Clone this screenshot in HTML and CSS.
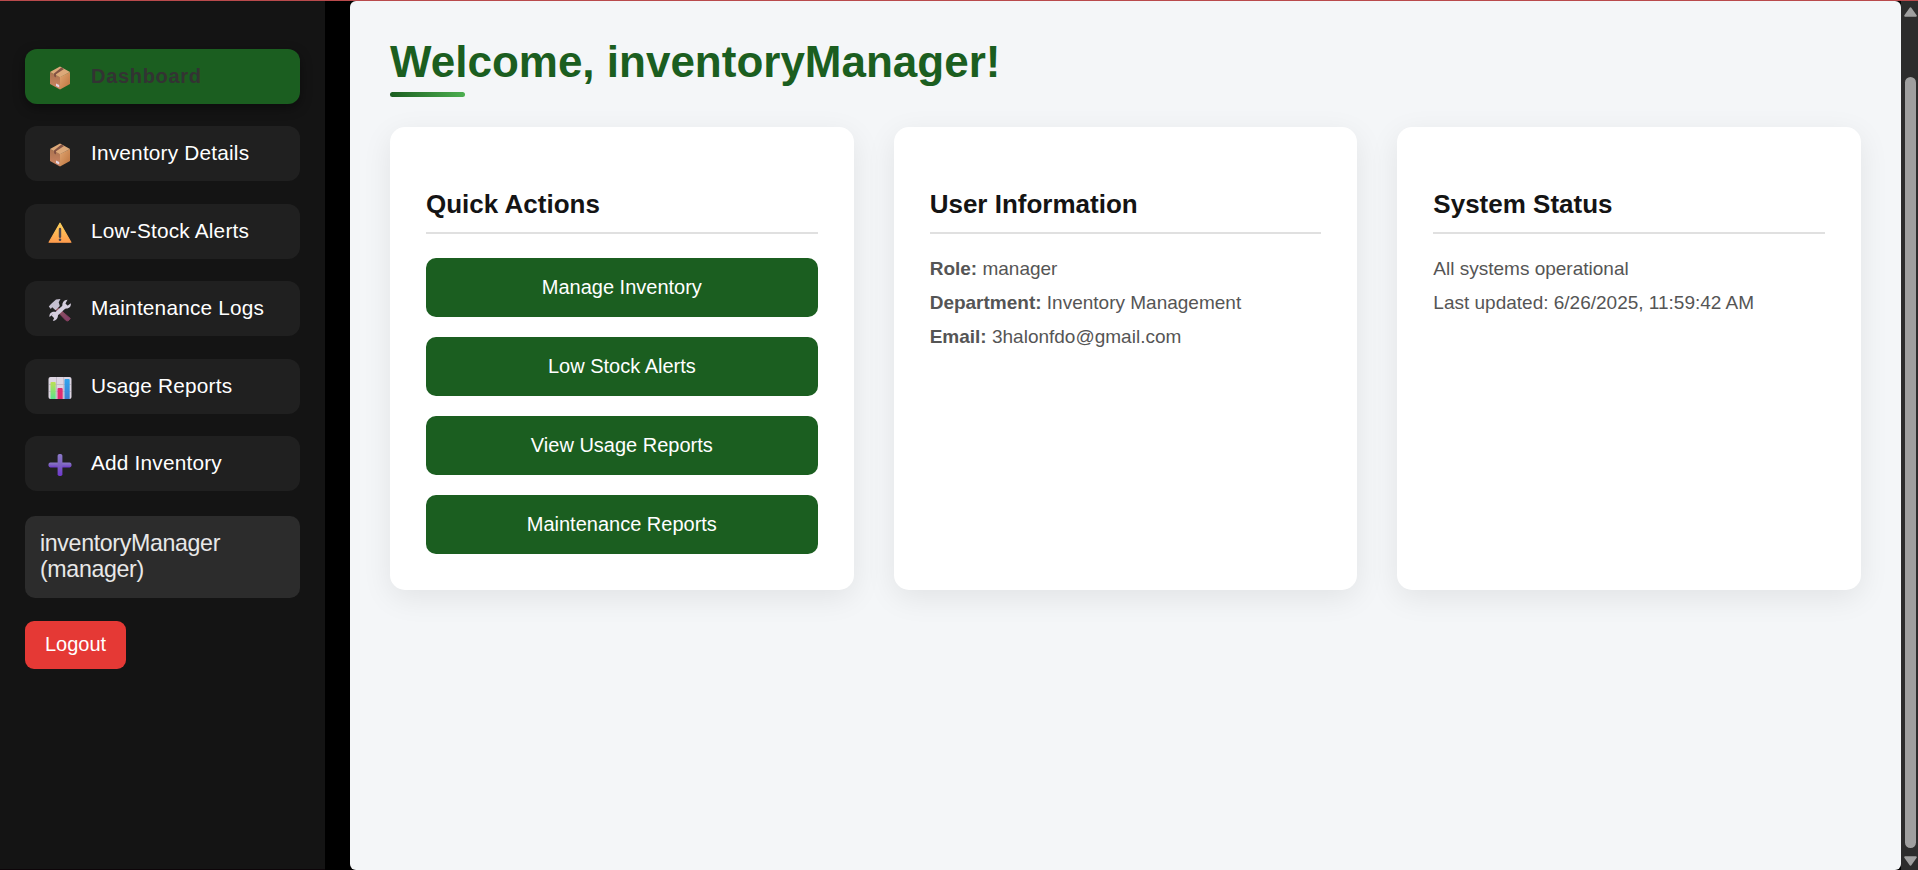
FILE: index.html
```html
<!DOCTYPE html>
<html lang="en">
<head>
<meta charset="utf-8">
<title>Inventory Dashboard</title>
<link rel="stylesheet" href="styles.css">
</head>
<body>
<svg class="defs" aria-hidden="true">
  <defs>
    <linearGradient id="warn" x2="0" y2="1"><stop stop-color="#ffd35c"/><stop offset="1" stop-color="#ff9c4d"/></linearGradient>
    <linearGradient id="boxL" x2="0" y2="1"><stop stop-color="#a97350"/><stop offset="1" stop-color="#cf8663"/></linearGradient>
    <linearGradient id="boxR" x2="1" y2="1"><stop stop-color="#e0a672"/><stop offset="1" stop-color="#bd733d"/></linearGradient>
    <linearGradient id="plus" x2="0" y2="1"><stop stop-color="#8b78c8"/><stop offset=".5" stop-color="#7c62bf"/><stop offset="1" stop-color="#7038cf"/></linearGradient>
    <linearGradient id="handle" x2="1" y2="1"><stop stop-color="#8a6058"/><stop offset="1" stop-color="#85396b"/></linearGradient>
    <linearGradient id="green" x2="0" y2="1"><stop stop-color="#bde052"/><stop offset="1" stop-color="#5be28c"/></linearGradient>
    <linearGradient id="blue" x2="0" y2="1"><stop stop-color="#2ea5ef"/><stop offset="1" stop-color="#3d7fd0"/></linearGradient>
    <symbol id="box" viewBox="0 0 24 24">
      <path d="M2 6 12 11v12.500L2 18z" fill="url(#boxL)"/>
      <path d="M12 11 22 6v12L12 23.500z" fill="url(#boxR)"/>
      <path d="M12 .5 22 6 12 11.300 2 6z" fill="#dda979"/>
      <path d="M13.300 1.500 16 3 8 8.200v3.200L6 10.300V7.400z" fill="#835344"/>
      <path d="m8 17.500 3.200 1.500v2.600L8 20z" fill="#e5d5e2"/>
    </symbol>
    <symbol id="alert" viewBox="0 0 24 24">
      <path d="M12 2.200 22.900 21.200H1.100z" fill="url(#warn)" stroke="url(#warn)" stroke-width="1.200" stroke-linejoin="round"/>
      <path d="M12 8v7.800" stroke="#4d4650" stroke-width="2.400" stroke-linecap="round"/>
      <circle cx="12" cy="18.700" r="1.300" fill="#4d4650"/>
    </symbol>
    <symbol id="tools" viewBox="0 0 24 24">
      <path d="M8.500 8.500 22.300 20.500 20 23 18 22.500 6.500 10.500z" fill="url(#handle)" stroke="#85405f"/>
      <path d="M.800 8.500 3 6 8 1.500 12.500 1 10.700 4.300 11.800 8 7.500 12.200 4.200 9.300 2.800 11z" fill="#c5bfd0"/>
      <path d="M5 19 18.500 6.800" stroke="#d5cedf" stroke-width="4.200"/>
      <path d="M19.500 1.700a5 5 0 0 0-4.700 7.100c1.300 2.300 5.600 2.400 7.300 0 .7-1 .9-2.300.7-3.500l-3.300 2.500-2.200-2z" fill="#d5cedf"/>
      <path d="M4.800 22.700a5 5 0 0 0 4.700-7.100c-1.300-2.300-5.600-2.400-7.300 0-.7 1-.9 2.300-.7 3.500l3.300-2.500 2.200 2z" fill="#d5cedf"/>
    </symbol>
    <symbol id="chart" viewBox="0 0 24 24">
      <rect x=".5" y="1" width="23" height="22" rx="2" fill="#ddd5e2"/>
      <path d="M1 8.500h22M1 15.500h22M8.500 1v22M15.700 1v22" stroke="#bcb3c1" stroke-width=".8"/>
      <path d="M2.500 7a1 1 0 0 1 1-1h3.200a1 1 0 0 1 1 1v16H2.500z" fill="url(#green)"/>
      <path d="M9.500 13a1 1 0 0 1 1-1h3.200a1 1 0 0 1 1 1v10H9.500z" fill="#df2d6f"/>
      <path d="M16.500 4a1 1 0 0 1 1-1h3.200a1 1 0 0 1 1 1v19h-5.200z" fill="url(#blue)"/>
    </symbol>
    <symbol id="add" viewBox="0 0 24 24">
      <rect x=".5" y="9.600" width="23" height="4.800" rx="1.800" fill="url(#plus)"/>
      <rect x="9.600" y="1" width="4.800" height="22" rx="1.800" fill="url(#plus)"/>
    </symbol>
  </defs>
</svg>
<div class="app">
  <aside class="sidebar">
    <nav class="nav">
      <a class="nav-item active"><svg class="icon"><use href="#box"/></svg><span>Dashboard</span></a>
      <a class="nav-item"><svg class="icon"><use href="#box"/></svg><span>Inventory Details</span></a>
      <a class="nav-item"><svg class="icon"><use href="#alert"/></svg><span>Low-Stock Alerts</span></a>
      <a class="nav-item"><svg class="icon"><use href="#tools"/></svg><span>Maintenance Logs</span></a>
      <a class="nav-item"><svg class="icon"><use href="#chart"/></svg><span>Usage Reports</span></a>
      <a class="nav-item"><svg class="icon"><use href="#add"/></svg><span>Add Inventory</span></a>
    </nav>
    <div class="user">inventoryManager (manager)</div>
    <button class="logout">Logout</button>
  </aside>
  <main class="main">
    <h1 class="title">Welcome, inventoryManager!</h1>
    <div class="rule"></div>
    <div class="cards">
      <section class="card">
        <h2>Quick Actions</h2>
        <div class="actions">
          <button class="action">Manage Inventory</button>
          <button class="action">Low Stock Alerts</button>
          <button class="action">View Usage Reports</button>
          <button class="action">Maintenance Reports</button>
        </div>
      </section>
      <section class="card">
        <h2>User Information</h2>
        <p><strong>Role:</strong> manager</p>
        <p><strong>Department:</strong> Inventory Management</p>
        <p><strong>Email:</strong> 3halonfdo@gmail.com</p>
      </section>
      <section class="card">
        <h2>System Status</h2>
        <p>All systems operational</p>
        <p>Last updated: 6/26/2025, 11:59:42 AM</p>
      </section>
    </div>
  </main>
  <div class="scrollbar">
    <svg class="arrow" viewBox="0 0 13 10"><path d="M6.500 1.200 11.800 8.800H1.200z"/></svg>
    <div class="thumb"></div>
    <svg class="arrow" viewBox="0 0 13 10"><path d="M6.500 8.800 11.800 1.200H1.200z"/></svg>
  </div>
</div>
</body>
</html>
```
FILE: styles.css
```css
* { box-sizing: border-box; }
body {
  margin: 0;
  background: #000;
  font-family: "Liberation Sans", Arial, sans-serif;
  overflow: hidden;
}
.defs { position: absolute; width: 0; height: 0; }
.app {
  display: flex;
  height: 870px;
  border-top: 1px solid #b94a4c;
}
.sidebar {
  width: 325px;
  padding: 48px 25px 0;
  background: #141414;
  border-bottom: 1px solid #0d0509;
}
.nav { display: flex; flex-direction: column; gap: 22.4px; }
.nav-item {
  display: flex;
  align-items: center;
  height: 55px;
  padding-left: 23px;
  border-radius: 12px;
  background: #202020;
  color: #fff;
  font-size: 20.800px;
  letter-spacing: 0.200px;
}
.nav-item span { margin: 0 0 1px 19px; }
.nav-item.active {
  background: #1b5e20;
  color: #333;
  font-size: 20px;
  font-weight: bold;
  letter-spacing: 0.700px;
  box-shadow: 0 4px 12px rgba(0, 0, 0, 0.4);
}
.icon { width: 24px; height: 24px; margin-top: 3px; }
.nav-item.active .icon { margin-top: 2px; }
.user {
  height: 82px;
  margin-top: 25px;
  padding: 14px 15px;
  border-radius: 10px;
  background: #2c2c2c;
  color: #e8e8e8;
  font-size: 23.200px;
  line-height: 26px;
  letter-spacing: -0.350px;
}
.logout {
  display: block;
  width: 101px;
  height: 48px;
  margin-top: 23px;
  padding: 0;
  border: 0;
  border-radius: 9px;
  background: #e53935;
  color: #fff;
  font: 20px "Liberation Sans", Arial, sans-serif;
}
.main {
  flex: 1;
  margin-left: 25px;
  padding: 36px 40px 0;
  border-radius: 6px;
  background: #f4f6f8;
}
.title {
  margin: 0;
  color: #1b5e20;
  font-size: 44px;
  line-height: 50px;
}
.rule {
  width: 75px;
  height: 5px;
  margin-top: 5px;
  border-radius: 2.500px;
  background: linear-gradient(90deg, #1b5e20, #4caf50);
}
.cards {
  display: grid;
  grid-template-columns: repeat(3, 1fr);
  gap: 40px;
  margin-top: 30px;
}
.card {
  height: 463px;
  padding: 60px 36px 36px;
  border-radius: 15px;
  background: #fff;
  box-shadow: 0 8px 30px rgba(0, 0, 0, 0.080);
}
.card h2 {
  height: 47px;
  margin: 0 0 18px;
  border-bottom: 2px solid #e0e0e0;
  color: #141414;
  font-size: 26px;
  line-height: 34px;
}
.card p {
  margin: 0;
  color: #555;
  font-size: 19px;
  line-height: 34px;
}
.actions { display: flex; flex-direction: column; gap: 20px; margin-top: 24px; }
.action {
  height: 59px;
  padding: 0;
  border: 0;
  border-radius: 10px;
  background: #1b5e20;
  color: #fff;
  font: 20px "Liberation Sans", Arial, sans-serif;
}
.scrollbar {
  display: flex;
  flex-direction: column;
  align-items: center;
  width: 17px;
  padding: 6px 0 4px 2px;
  background: #2c2c2c;
}
.arrow { flex: none; width: 13px; height: 10px; }
.arrow path { fill: #9f9f9f; stroke: #9f9f9f; stroke-width: 2; stroke-linejoin: round; }
.thumb { flex: 1; width: 11px; margin: 60px 0 8px; border-radius: 6px; background: #9f9f9f; }
```
